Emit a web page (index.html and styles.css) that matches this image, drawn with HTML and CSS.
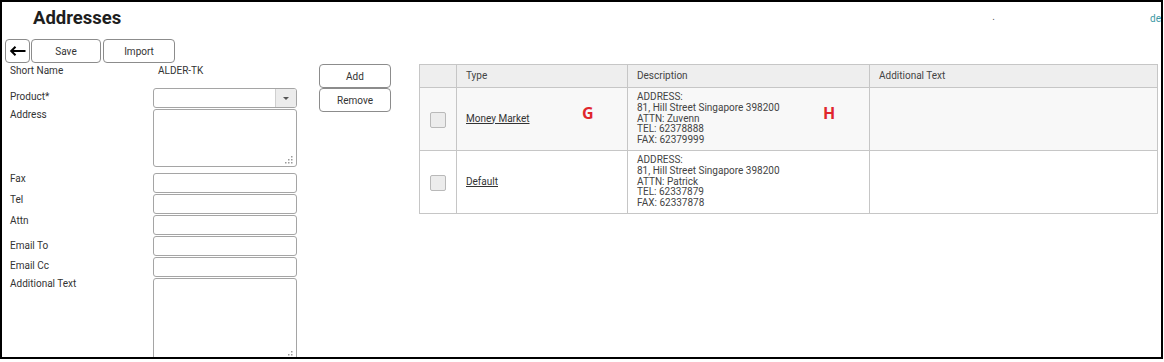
FILE: index.html
```html
<!DOCTYPE html>
<html lang="en">
<head>
    <meta charset="UTF-8">
    <title>Addresses</title>
    <link rel="stylesheet" href="styles.css">
</head>
<body>

<div class="frame">

    <div class="header">
        <h1 class="title">Addresses</h1>
        <span class="dot">.</span>
        <span class="user">de</span>
    </div>

    <div class="toolbar">
        <button class="btn btn-back" title="Back">
            <svg width="17" height="10" viewBox="0 0 17 10">
                <path d="M16.5 5H2 M6.5 0.8 L2.2 5 L6.5 9.2" fill="none" stroke="#000" stroke-width="2"/>
            </svg>
        </button>
        <button class="btn btn-save">Save</button>
        <button class="btn btn-import">Import</button>
    </div>

    <div class="main">

        <div class="form">
            <div class="row row-short">
                <label>Short Name</label>
                <span class="value">ALDER-TK</span>
            </div>
            <div class="row">
                <label class="low">Product*</label>
                <div class="select">
                    <span class="select-text"></span>
                    <span class="select-arrow"></span>
                </div>
            </div>
            <div class="row row-address">
                <label>Address</label>
                <div class="area">
                    <textarea></textarea>
                    <svg class="grip" width="8" height="8" viewBox="0 0 8 8">
                        <rect x="6" y="0" width="1.5" height="1.5"/>
                        <rect x="3" y="3" width="1.5" height="1.5"/>
                        <rect x="6" y="3" width="1.5" height="1.5"/>
                        <rect x="0" y="6" width="1.5" height="1.5"/>
                        <rect x="3" y="6" width="1.5" height="1.5"/>
                        <rect x="6" y="6" width="1.5" height="1.5"/>
                    </svg>
                </div>
            </div>
            <div class="row">
                <label>Fax</label>
                <input type="text">
            </div>
            <div class="row">
                <label>Tel</label>
                <input type="text">
            </div>
            <div class="row">
                <label>Attn</label>
                <input type="text">
            </div>
            <div class="row">
                <label class="lower">Email To</label>
                <input type="text">
            </div>
            <div class="row">
                <label class="low">Email Cc</label>
                <input type="text">
            </div>
            <div class="row">
                <label>Additional Text</label>
                <div class="area area-big">
                    <textarea></textarea>
                    <svg class="grip" width="8" height="8" viewBox="0 0 8 8">
                        <rect x="6" y="0" width="1.5" height="1.5"/>
                        <rect x="3" y="3" width="1.5" height="1.5"/>
                        <rect x="6" y="3" width="1.5" height="1.5"/>
                        <rect x="0" y="6" width="1.5" height="1.5"/>
                        <rect x="3" y="6" width="1.5" height="1.5"/>
                        <rect x="6" y="6" width="1.5" height="1.5"/>
                    </svg>
                </div>
            </div>
        </div>

        <div class="actions">
            <button class="btn btn-side">Add</button>
            <button class="btn btn-side">Remove</button>
        </div>

        <div class="grid-wrap">
            <table class="grid">
                <colgroup>
                    <col class="col-check">
                    <col class="col-type">
                    <col class="col-desc">
                    <col>
                </colgroup>
                <thead>
                    <tr>
                        <th></th>
                        <th>Type</th>
                        <th>Description</th>
                        <th>Additional Text</th>
                    </tr>
                </thead>
                <tbody>
                    <tr class="shaded">
                        <td class="check-cell"><span class="check"></span></td>
                        <td><a href="#">Money Market</a></td>
                        <td>ADDRESS:<br>81, Hill Street Singapore 398200<br>ATTN: Zuvenn<br>TEL: 62378888<br>FAX: 62379999</td>
                        <td></td>
                    </tr>
                    <tr>
                        <td class="check-cell"><span class="check"></span></td>
                        <td><a href="#">Default</a></td>
                        <td>ADDRESS:<br>81, Hill Street Singapore 398200<br>ATTN: Patrick<br>TEL: 62337879<br>FAX: 62337878</td>
                        <td></td>
                    </tr>
                </tbody>
            </table>
            <span class="mark mark-g">G</span>
            <span class="mark mark-h">H</span>
        </div>

    </div>
</div>

</body>
</html>
```

FILE: styles.css
```css
body {
    margin: 0;
    background-color: #fff;
    font-family: Roboto, "Liberation Sans", Arial, sans-serif;
    font-size: 10px;
    color: #333;
}

.frame {
    box-sizing: border-box;
    width: 1163px;
    height: 359px;
    border: 2px solid #000;
    overflow: hidden;
}

/* header */
.header {
    box-sizing: border-box;
    display: flex;
    align-items: flex-start;
    height: 37px;
    padding: 5px 0 0 31px;
}

.title {
    margin: 0;
    font-size: 18.5px;
    line-height: 22px;
    font-weight: bold;
    color: #1e1e1e;
}

.dot {
    margin: 4px 155px 0 auto;
    line-height: 12px;
    color: #555;
}

.user {
    width: 11px;
    margin-top: 5px;
    font-size: 10px;
    line-height: 13px;
    white-space: nowrap;
    color: #3d9aa6;
}

/* buttons */
.toolbar {
    display: flex;
    height: 24px;
    padding-left: 3px;
}

.btn {
    box-sizing: border-box;
    height: 24px;
    padding: 0;
    background-color: #fff;
    border: 1px solid #8c8c8c;
    border-radius: 4px;
    font-family: inherit;
    font-size: 10px;
    color: #333;
}

.btn-back {
    width: 25px;
    display: flex;
    align-items: center;
    justify-content: center;
}

.btn-save {
    width: 70px;
    margin-left: 1px;
}

.btn-import {
    width: 72px;
    margin-left: 2px;
}

/* layout */
.main {
    display: flex;
    align-items: flex-start;
    margin-top: 1px;
}

.form {
    padding-left: 8px;
}

.row {
    display: flex;
    margin-bottom: 1px;
}

.row label {
    width: 143px;
    line-height: 12px;
}

.row label.low {
    padding-top: 3px;
}

.row label.lower {
    padding-top: 4px;
}

.row-short {
    height: 23px;
}

.row-short label {
    padding-top: 1px;
}

.value {
    padding: 1px 0 0 5px;
    line-height: 12px;
}

.row-address {
    margin-bottom: 6px;
}

input,
textarea,
.select {
    box-sizing: border-box;
    width: 144px;
    border: 1px solid #a5a5a5;
    border-radius: 3px;
    background-color: #fff;
}

input {
    height: 20px;
    padding: 0 4px;
}

.select {
    display: flex;
    height: 20px;
    overflow: hidden;
}

.select-text {
    flex: 1;
}

.select-arrow {
    width: 20px;
    display: flex;
    align-items: center;
    justify-content: center;
    background-color: #ececec;
    border-left: 1px solid #cfcfcf;
}

.select-arrow::after {
    content: "";
    border-left: 3px solid transparent;
    border-right: 3px solid transparent;
    border-top: 3px solid #555;
}

.area {
    position: relative;
    width: 144px;
    height: 58px;
}

.area-big {
    height: 84px;
}

textarea {
    display: block;
    height: 100%;
    resize: none;
}

.grip {
    position: absolute;
    right: 4px;
    bottom: 3px;
    fill: #9a9a9a;
}

.actions {
    display: flex;
    flex-direction: column;
    margin-left: 22px;
}

.btn-side {
    width: 72px;
    height: 24px;
}

/* table */
.grid-wrap {
    position: relative;
    margin-left: 28px;
}

.grid {
    width: 739px;
    table-layout: fixed;
    border-collapse: collapse;
}

.col-check {
    width: 37px;
}

.col-type {
    width: 171px;
}

.col-desc {
    width: 242px;
}

.grid th,
.grid td {
    border: 1px solid #c6c6c6;
    padding: 0 0 0 9px;
    text-align: left;
    vertical-align: middle;
    font-weight: normal;
    line-height: 10.8px;
    color: #444;
}

.grid thead tr {
    height: 23px;
    background-color: #eeeeee;
}

.grid tbody tr {
    height: 63px;
}

.grid tr.shaded {
    background-color: #f8f8f8;
}

.grid td.check-cell {
    padding: 0;
    text-align: center;
}

.check {
    display: inline-block;
    box-sizing: border-box;
    width: 16px;
    height: 16px;
    margin-top: 1px;
    background-color: #ececec;
    border: 1px solid #b9b9b9;
    border-radius: 2px;
    vertical-align: middle;
}

.grid a {
    color: #333;
}

.mark {
    position: absolute;
    top: 41px;
    font-family: "Open Sans", sans-serif;
    font-size: 16px;
    line-height: 16px;
    font-weight: bold;
    color: #e0262c;
}

.mark-g {
    left: 163px;
}

.mark-h {
    left: 404px;
}
```
